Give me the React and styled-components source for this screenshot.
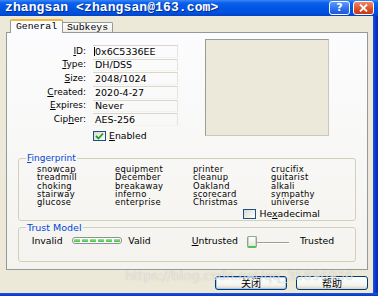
import React from "react";
import styled, { createGlobalStyle } from "styled-components";

const GlobalStyle = createGlobalStyle`
  html, body {
    margin: 0;
    padding: 0;
    background: #ECE9D8;
  }
  body {
    font-family: "DejaVu Sans", Verdana, sans-serif;
    color: #000;
  }
`;

const Window = styled.div`
  position: relative;
  width: 378px;
  height: 296px;
  overflow: hidden;
  display: flex;
  flex-direction: column;
  background: #ECE9D8;
`;

const TitleBar = styled.div`
  height: 16px;
  flex: none;
  display: flex;
  align-items: center;
  justify-content: space-between;
  padding: 0 4px 0 5px;
  background: linear-gradient(#3D86F7 0%, #0C61EA 18%, #0055E3 50%, #0050DD 82%, #0441C2 100%);
`;

const Title = styled.span`
  font-family: "Liberation Mono", monospace;
  font-weight: bold;
  font-size: 13px;
  line-height: 16px;
  letter-spacing: 0.1px;
  color: #fff;
  text-shadow: 1px 1px 0 #0A2B8C;
  white-space: nowrap;
`;

const Caption = styled.div`
  display: flex;
  gap: 3px;
`;

const CaptionButton = styled.div`
  width: 21px;
  height: 14px;
  box-sizing: border-box;
  border: 1px solid #fff;
  border-radius: 3px;
  display: flex;
  align-items: center;
  justify-content: center;
  color: #fff;
  font-family: "DejaVu Sans", sans-serif;
  font-weight: bold;
  font-size: 11px;
  line-height: 12px;
  background: ${(p) =>
    p.$close
      ? "linear-gradient(#EE8A6C, #DC4F26 60%, #C63A12)"
      : "linear-gradient(#5C9AFA, #2D6EEB 60%, #1F58D6)"};
`;

const Middle = styled.div`
  flex: 1;
  display: flex;
  min-height: 0;
`;

const Content = styled.div`
  flex: 1;
  display: flex;
  flex-direction: column;
  padding-top: 3px;
`;

const RightFrame = styled.div`
  width: 5px;
  background: linear-gradient(to right, #1F55E0, #0838CF 50%, #072AA8);
`;

const BottomFrame = styled.div`
  height: 3px;
  flex: none;
  background: linear-gradient(#1F55E0, #0734C4);
`;

const Tabs = styled.div`
  height: 13px;
  display: flex;
  align-items: flex-end;
  padding-left: 10px;
`;

const Tab = styled.div`
  box-sizing: border-box;
  width: ${(p) => p.$w}px;
  font-family: "Liberation Mono", monospace;
  font-size: 9.8px;
  text-align: center;
  white-space: nowrap;
  ${(p) =>
    p.$active
      ? `
    height: 14px;
    margin-bottom: -1px;
    position: relative;
    z-index: 1;
    background: #FCFCFE;
    border: 1px solid #919B9C;
    border-bottom: none;
    border-top: 2px solid #F5B63C;
    border-radius: 2px 2px 0 0;
    padding-top: 1px;
    line-height: 10px;
  `
      : `
    height: 10px;
    background: linear-gradient(#FEFEFE, #EEEDE5);
    border: 1px solid #919B9C;
    border-bottom: none;
    border-left: none;
    border-radius: 0 2px 0 0;
    line-height: 9px;
  `}
`;

const Panel = styled.div`
  box-sizing: border-box;
  width: 362px;
  height: 238px;
  margin-left: 6px;
  border: 1px solid #919B9C;
  background: linear-gradient(#FCFCFE, #F4F3EE);
  display: flex;
  flex-direction: column;
`;

const TopSection = styled.div`
  box-sizing: border-box;
  height: 120px;
  padding-top: 6px;
  display: flex;
`;

const FieldsColumn = styled.div`
  width: 171px;
  padding-top: 5.5px;
`;

const FieldGrid = styled.div`
  display: grid;
  grid-template-columns: 79px 85px;
  grid-auto-rows: 13.67px;
  column-gap: 7px;
  align-items: center;
`;

const Label = styled.span`
  text-align: right;
  font-size: 9px;
  line-height: 11px;
  white-space: nowrap;
`;

const Value = styled.div`
  box-sizing: border-box;
  height: 12.5px;
  display: flex;
  align-items: center;
  padding-left: 2px;
  border-top: 1px solid #D9D7CC;
  border-right: 1px solid #E6E4DB;
  border-bottom: 1px solid #F3F2EC;
  font-size: 9.5px;
  line-height: 11px;
  white-space: nowrap;
`;

const Caret = styled.span`
  width: 1px;
  height: 9px;
  background: #000;
  margin-left: -1px;
`;

const CheckRow = styled.div`
  display: flex;
  align-items: center;
  gap: ${(p) => p.$gap}px;
  margin: ${(p) => p.$margin};
  height: 10px;
  font-size: 9.3px;
  line-height: 11px;
  white-space: nowrap;
`;

const CheckBox = styled.span`
  width: 13px;
  height: 10px;
  box-sizing: border-box;
  border: 1px solid #1C5180;
  background: linear-gradient(135deg, #D8D8D2, #FFFFFF);
  display: inline-flex;
  align-items: center;
  justify-content: center;
`;

const Photo = styled.div`
  box-sizing: border-box;
  margin-left: 27px;
  width: 124px;
  height: 97px;
  border: 1px solid;
  border-color: #9C9B94 #C9C7BE #C9C7BE #9C9B94;
  background: #ECE8DA;
`;

const Group = styled.fieldset`
  margin: ${(p) => p.$mt || 0}px 11px 0 11px;
  padding: 0 0 ${(p) => p.$pb}px 8px;
  border: 1px solid #D0D0BF;
  border-radius: 3px;
  min-width: 0;
`;

const Legend = styled.legend`
  padding: 0 1px;
  margin-left: -1px;
  color: #0046D5;
  font-size: ${(p) => p.$size}px;
  line-height: 11px;
`;

const Words = styled.div`
  margin: 1.2px 0 0 10px;
  display: grid;
  grid-auto-flow: column;
  grid-template-rows: repeat(5, 8.25px);
  grid-template-columns: repeat(4, 78px);
  font-size: 8.4px;
  letter-spacing: 0.3px;
  line-height: 8.25px;
  white-space: nowrap;
`;

const TrustRow = styled.div`
  margin-top: 3px;
  padding-left: 4.7px;
  display: grid;
  grid-template-columns: 40px 56.6px 63.4px 55px 53.3px auto;
  grid-template-rows: 9px;
  align-items: center;
  font-size: 9.3px;
  line-height: 11px;
  white-space: nowrap;
`;

const Progress = styled.div`
  box-sizing: border-box;
  width: 50px;
  height: 7px;
  padding: 1px;
  border: 1px solid #8F9090;
  border-radius: 3px;
  background: #fff;
  display: flex;
  gap: 2px;
  align-items: center;
`;

const Segment = styled.span`
  width: 6px;
  height: 3px;
  background: linear-gradient(#9BE59B, #3CC43C);
`;

const Slider = styled.div`
  height: 9px;
  display: flex;
  align-items: flex-start;
`;

const Thumb = styled.div`
  box-sizing: border-box;
  width: 10px;
  height: 12px;
  border: 1px solid #9A9E95;
  border-bottom: 2px solid #55BD55;
  border-radius: 2px;
  background: linear-gradient(#FFFFFF, #E6E6DE);
  box-shadow: inset 1px 0 0 #B8E2B8, inset -1px 0 0 #B8E2B8;
`;

const Track = styled.div`
  width: 32px;
  height: 1px;
  margin-top: 6px;
  background: #9D9D97;
  border-bottom: 1px solid #fff;
`;

const ButtonRow = styled.div`
  margin-top: 6px;
  padding-right: 5px;
  display: flex;
  justify-content: flex-end;
  gap: 9px;
`;

const Button = styled.button`
  box-sizing: border-box;
  width: 72px;
  height: 14px;
  padding: 0;
  border: 1px solid #003C74;
  border-radius: 3px;
  background: linear-gradient(#FFFFFF, #F3F3EE 70%, #D8D3C6);
  box-shadow: ${(p) => (p.$default ? "inset 0 0 0 1px #A9C9F4" : "none")};
  font-family: "Noto Sans CJK SC", sans-serif;
  font-size: 10px;
  line-height: 12px;
  color: #000;
`;

const Watermark = styled.div`
  position: absolute;
  left: 125px;
  top: 268px;
  font-family: "DejaVu Sans", sans-serif;
  font-size: 13px;
  line-height: 16px;
  color: rgba(255, 255, 255, 0.6);
  text-shadow: 0 0 1px rgba(140, 140, 140, 0.55);
  white-space: nowrap;
  pointer-events: none;
`;

const fields = [
  ["I", "D:", "0x6C5336EE"],
  ["T", "ype:", "DH/DSS"],
  ["S", "ize:", "2048/1024"],
  ["C", "reated:", "2020-4-27"],
  ["E", "xpires:", "Never"],
];

const words = [
  "snowcap", "treadmill", "choking", "stairway", "glucose",
  "equipment", "December", "breakaway", "inferno", "enterprise",
  "printer", "cleanup", "Oakland", "scorecard", "Christmas",
  "crucifix", "guitarist", "alkali", "sympathy", "universe",
];

const Check = () => (
  <svg width="9" height="8" viewBox="0 0 9 8">
    <path d="M1 4 L3.5 6.5 L8 1.5" fill="none" stroke="#21A121" strokeWidth="1.8" />
  </svg>
);

const App = () => {
  return (
    <Window>
      <GlobalStyle />
      <TitleBar>
        <Title>zhangsan &lt;zhangsan@163.com&gt;</Title>
        <Caption>
          <CaptionButton>?</CaptionButton>
          <CaptionButton $close>
            <svg width="9" height="8" viewBox="0 0 9 8">
              <path d="M1 0.5 L8 7.5 M8 0.5 L1 7.5" stroke="#fff" strokeWidth="1.8" />
            </svg>
          </CaptionButton>
        </Caption>
      </TitleBar>
      <Middle>
        <Content>
          <Tabs>
            <Tab $active $w={53}>General</Tab>
            <Tab $w={50}>Subkeys</Tab>
          </Tabs>
          <Panel>
            <TopSection>
              <FieldsColumn>
                <FieldGrid>
                  {fields.map(([u, rest, v], i) => (
                    <React.Fragment key={v}>
                      <Label><u>{u}</u>{rest}</Label>
                      <Value>
                        {i === 0 && <Caret />}
                        {v}
                      </Value>
                    </React.Fragment>
                  ))}
                  <Label>Cip<u>h</u>er:</Label>
                  <Value>AES-256</Value>
                </FieldGrid>
                <CheckRow $gap={3} $margin="4.5px 0 0 86px">
                  <CheckBox><Check /></CheckBox>
                  <span><u>E</u>nabled</span>
                </CheckRow>
              </FieldsColumn>
              <Photo />
            </TopSection>
            <Group $pb={1}>
              <Legend $size={9}><u>F</u>ingerprint</Legend>
              <Words>
                {words.map((w) => (
                  <span key={w}>{w}</span>
                ))}
              </Words>
              <CheckRow $gap={3.5} $margin="2.5px 0 0 216px">
                <CheckBox />
                <span>He<u>x</u>adecimal</span>
              </CheckRow>
            </Group>
            <Group $mt={1.5} $pb={16}>
              <Legend $size={9.5}>Trust Model</Legend>
              <TrustRow>
                <span>Invalid</span>
                <Progress>
                  {[0, 1, 2, 3, 4, 5].map((i) => (
                    <Segment key={i} />
                  ))}
                </Progress>
                <span>Valid</span>
                <span><u>U</u>ntrusted</span>
                <Slider>
                  <Thumb />
                  <Track />
                </Slider>
                <span>Trusted</span>
              </TrustRow>
            </Group>
          </Panel>
          <ButtonRow>
            <Button $default>关闭</Button>
            <Button>帮助</Button>
          </ButtonRow>
        </Content>
        <RightFrame />
      </Middle>
      <BottomFrame />
      <Watermark>https://blog.csdn.net/qq_35896936</Watermark>
    </Window>
  );
};

export default App;
